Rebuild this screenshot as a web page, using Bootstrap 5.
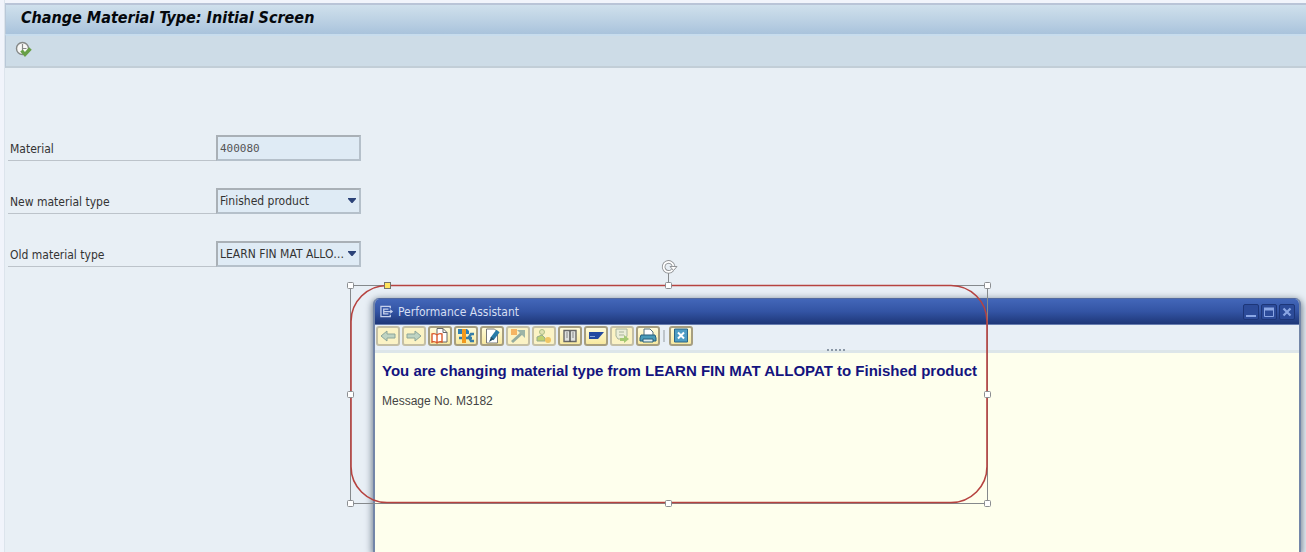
<!DOCTYPE html>
<html lang="en">
<head>
<meta charset="utf-8">
<meta name="viewport" content="width=device-width, initial-scale=1">
<title>Change Material Type: Initial Screen</title>
<link href="https://cdn.jsdelivr.net/npm/bootstrap@5.3.0/dist/css/bootstrap.min.css" rel="stylesheet">
<style>
body { background: #f1f4fb; font-family: "DejaVu Sans Condensed", "DejaVu Sans", sans-serif; font-size: 12px; line-height: 16px; color: #333; }
.screen { background: #e8eff5; border-left: 1px solid #dce4ec; margin-left: 4px; overflow: hidden; }
.top-edge { height: 3px; background: #f1f4fb; }
.title-bar { height: 31px; background: linear-gradient(#cfe0ec, #bdd2e4 50%, #a9c3dc); border-top: 2px solid #b9c4d7; border-left: 1px solid #b9c8d8; padding: 3px 15px; }
.title-bar h1 { font: italic bold 16px/20px "DejaVu Sans Condensed", "DejaVu Sans", sans-serif; color: #05080c; }
.app-bar { height: 34px; background: #cddce7; border-top: 2px solid #c7dced; border-bottom: 2px solid #c2ced7; border-left: 1px solid #b9c8d8; padding: 3px 7px; }
.app-bar .btn { width: 20px; height: 20px; }
.fields { padding-top: 67px; padding-left: 3px; width: 356px; gap: 27px; }
.field-row { height: 26px; }
.field-row label { flex: none; width: 208px; padding: 6px 2px 3px; border-bottom: 1px solid #bcc3ca; }
.field-row .form-control, .field-row .form-select { flex: 1; min-width: 0; height: 26px; min-height: 26px; border: 2px solid #a9b0b6; border-right-color: #b5c0ca; border-bottom-color: #b5c0ca; background-color: #dfebf5; padding: 0 2px; font-size: 12px; line-height: 16px; color: #333; }
.field-row .form-control { font-family: "DejaVu Sans Mono", "Liberation Mono", monospace; font-size: 11px; color: #555; }
.field-row .form-select { text-overflow: clip; padding-right: 12px; background-image: url("data:image/svg+xml,%3Csvg xmlns='http://www.w3.org/2000/svg' viewBox='0 0 8 5'%3E%3Cpath d='M0 0h8v1L4.500 5h-1L0 1z' fill='%232c4378'/%3E%3C/svg%3E"); background-size: 8px 5px; background-position: right 3px top 8px; }
.help-window { left: 368px; right: 5px; top: 298px; bottom: 0; border: 2px solid #7386a8; border-top: 1px solid #5269a0; border-bottom: 0; border-radius: 6px 6px 0 0; background: #feffed; box-shadow: 0 2px 7px 1px #6e7b8b; overflow: hidden; }
.help-title { height: 26px; background: linear-gradient(#4367b9, #3354a4 50%, #1e3778); border-bottom: 1px solid #677db0; padding: 0 4px 0 5px; color: #d5def2; }
.help-title h2 { font-size: 12px; line-height: 16px; font-weight: normal; }
.window-buttons { gap: 2px; }
.help-title .btn { width: 16px; height: 16px; border: 1px solid #1d3678; border-radius: 2px; background: #2c4b99; }
.help-tools { height: 28px; background: #e8eff6; border-bottom: 3px solid #dde6e9; gap: 2px; padding: 1px 0 0 1px; }
.help-tools .btn { width: 24px; height: 20px; border: 2px solid #a69e80; border-radius: 3px; background: linear-gradient(#fffbd9, #f8e9a0); }
.help-tools .btn:disabled { border-color: #c4bfa5; background: #fbf3c5; opacity: 1; }
.help-tools .btn:disabled svg { opacity: .7; }
.tool-rule { width: 2px; height: 12px; margin: 4px 2px 0 1px; background: #bec5cb; }
.grip { left: 50%; bottom: -1px; width: 18px; height: 2px; background: repeating-linear-gradient(90deg, #8b98a6 0 2px, transparent 2px 4px); margin-left: -10px; }
.help-text { padding: 9px 7px; font-family: "Liberation Sans", Arial, sans-serif; }
.help-text h3 { font-size: 15px; line-height: 18px; font-weight: bold; color: #14147e; margin-bottom: 13px; }
.help-text p { color: #444; }
.selection { left: 339px; top: 258px; pointer-events: none; }
</style>
</head>
<body class="min-vh-100 d-flex flex-column">
<main class="screen position-relative flex-grow-1">
  <div class="top-edge"></div>
  <header class="title-bar"><h1 class="m-0">Change Material Type: Initial Screen</h1></header>
  <div class="app-bar">
    <button type="button" class="btn p-0 border-0 d-flex align-items-center justify-content-center" aria-label="Execute">
      <svg width="17" height="17" viewBox="0 0 17 17"><circle cx="7.500" cy="7.500" r="6" fill="#f8f8f6" stroke="#858887" stroke-width="1.400"/><path d="M7.500 3v7M7.500 7.500h4" fill="none" stroke="#888" stroke-width="1.200"/><path d="M6.500 9.500l3.500 4 5.500-6" fill="none" stroke="#68a047" stroke-width="3.400"/></svg>
    </button>
  </div>
  <form class="fields d-flex flex-column">
    <div class="field-row d-flex"><label for="material">Material</label><input id="material" class="form-control rounded-0 shadow-none" value="400080"></div>
    <div class="field-row d-flex"><label for="newtype">New material type</label><select id="newtype" class="form-select rounded-0 shadow-none"><option>Finished product</option></select></div>
    <div class="field-row d-flex"><label for="oldtype">Old material type</label><select id="oldtype" class="form-select rounded-0 shadow-none"><option>LEARN FIN MAT ALLO…</option></select></div>
  </form>

  <section class="help-window position-absolute">
    <div class="help-title d-flex align-items-center">
      <svg class="me-1" width="14" height="14" viewBox="0 0 15 14" fill="none" stroke="#c5d0ec" stroke-width="1.400"><path d="M11 3V1H1v11h10v-2"/><path d="M9 4H4v5h5M4 6.500h9"/><path d="M11 4l3 2.500L11 9z" fill="#c5d0ec" stroke="none"/></svg>
      <h2 class="m-0 me-auto">Performance Assistant</h2>
      <div class="window-buttons d-flex">
        <button type="button" class="btn p-0 d-flex" aria-label="Minimize"><svg width="14" height="14"><path d="M2 11h10" stroke="#8aa6e4" stroke-width="2"/></svg></button>
        <button type="button" class="btn p-0 d-flex" aria-label="Maximize"><svg width="14" height="14" fill="none" stroke="#8aa6e4"><path d="M2.500 3.500h9v8h-9z"/><path d="M2 4h10" stroke-width="3"/></svg></button>
        <button type="button" class="btn p-0 d-flex" aria-label="Close"><svg width="14" height="14"><path d="M3.500 3.500l7 7m0-7l-7 7" stroke="#8aa6e4" stroke-width="2.200"/></svg></button>
      </div>
    </div>
    <div class="help-tools d-flex position-relative">
      <button type="button" class="btn p-0 d-flex" disabled aria-label="Back"><svg width="20" height="16"><path d="M3 8l6-5v3h8v4H9v3z" fill="#a5c6c2" stroke="#5e8587"/></svg></button>
      <button type="button" class="btn p-0 d-flex" disabled aria-label="Forward"><svg width="20" height="16"><path d="M17 8l-6-5v3H3v4h8v3z" fill="#a5c6c2" stroke="#5e8587"/></svg></button>
      <button type="button" class="btn p-0 d-flex" aria-label="Application help"><svg width="20" height="16"><path d="M7 .5h6l4 4V14H7z" fill="#fff" stroke="#666"/><path d="M13 .5v4h4" fill="none" stroke="#666"/><path d="M2 6q3-1 5 1 2-2 5-1v8q-3-1-5 1-2-2-5-1zM7 7v7" fill="#fff" stroke="#d95a2c" stroke-width="1.400"/></svg></button>
      <button type="button" class="btn p-0 d-flex" aria-label="Technical information"><svg width="20" height="16"><path d="M2 1h9l2 2v3H2z" fill="#2f80b5"/><path d="M6 1h4v14H6z" fill="#f39a1d"/><path d="M3 10h13" stroke="#367da8" stroke-width="2.500"/><path d="M6 8h4v7H6z" fill="#f39a1d"/><path d="M18 6h-3l-2 3 2 4h3" fill="none" stroke="#367da8" stroke-width="2.400"/></svg></button>
      <button type="button" class="btn p-0 d-flex" aria-label="Edit documentation"><svg width="20" height="16"><path d="M4.500 1h8l3 3v11h-11z" fill="#fff" stroke="#777"/><path d="M16 3l-6 8" stroke="#287ba7" stroke-width="4"/><path d="M9 9l-2 5 5-3z" fill="#1f4c67"/></svg></button>
      <button type="button" class="btn p-0 d-flex" disabled aria-label="Customizing"><svg width="20" height="16"><path d="M3 1h6v6H3z" fill="#f39c3a"/><path d="M4 14l10-9" stroke="#698f91" stroke-width="3"/><path d="M9 2h8v8l-3-3z" fill="#769b9b"/></svg></button>
      <button type="button" class="btn p-0 d-flex" disabled aria-label="Contact"><svg width="20" height="16"><circle cx="8" cy="4" r="2.500" fill="#d5dcaa" stroke="#8ea96b"/><path d="M3 13V9l5-2 3 3v3z" fill="#a5c34e" stroke="#6a8e7b"/><circle cx="14" cy="12" r="3" fill="#ecb33d"/></svg></button>
      <button type="button" class="btn p-0 d-flex" aria-label="Glossary"><svg width="20" height="16"><path d="M4 2.500h12v11H4z" fill="#dfe1df" stroke="#666" stroke-width="1.400"/><path d="M10 3v11" stroke="#555" stroke-width="1.500"/><path d="M6 5h2M6 7h2M6 9h2M12 5h2M12 7h2M12 9h2" stroke="#888"/></svg></button>
      <button type="button" class="btn p-0 d-flex" aria-label="SAP help"><svg width="20" height="16"><path d="M3 4h7v7H3z" fill="#244aa0"/><path d="M10 4h8l-6 7h-2z" fill="#244aa0"/><path d="M4 8.500h5" stroke="#87a6da"/></svg></button>
      <button type="button" class="btn p-0 d-flex" disabled aria-label="Export"><svg width="20" height="16"><path d="M4 1h11v7l-2 3H6L4 8z" fill="#e5ece1" stroke="#86998a"/><path d="M7 4h5M7 7h5" stroke="#86998a"/><path d="M8 10h4V7l5 4-5 4v-2H8z" fill="#80b850"/></svg></button>
      <button type="button" class="btn p-0 d-flex" aria-label="Print"><svg width="20" height="16"><path d="M6 7V1h6l3 3v3" fill="#fff" stroke="#52707d"/><path d="M3 7h14l1 3v3H2v-3z" fill="#4a9bb8" stroke="#265f7b"/><path d="M5 11h10v3H5z" fill="#ddecf0" stroke="#265f7b"/></svg></button>
      <span class="tool-rule"></span>
      <button type="button" class="btn p-0 d-flex" aria-label="Close help"><svg width="20" height="16"><path d="M3.500 1h13v13h-13z" fill="#4e9dc4" stroke="#2b6587"/><path d="M7 4.500l6 6m0-6l-6 6" stroke="#fff" stroke-width="2"/></svg></button>
      <span class="grip position-absolute"></span>
    </div>
    <article class="help-text">
      <h3>You are changing material type from LEARN FIN MAT ALLOPAT to Finished product</h3>
      <p class="m-0">Message No. M3182</p>
    </article>
  </section>

  <!-- Selected rounded rectangle with its resize, shape and rotate handles -->
  <svg class="selection position-absolute" width="652" height="252" fill="none">
    <path d="M6.500 27.500h637v218H6.500zM324.500 27V14" stroke="#85898c"/>
    <rect x="7" y="27.500" width="636" height="217" rx="36" stroke="#b64340" stroke-width="1.600"/>
    <g fill="#fff" stroke="#8b8e91">
      <rect x="3.500" y="24.500" width="6" height="6" rx="1"/><rect x="321.500" y="24.500" width="6" height="6" rx="1"/><rect x="640.500" y="24.500" width="6" height="6" rx="1"/>
      <rect x="3.500" y="133.500" width="6" height="6" rx="1"/><rect x="640.500" y="133.500" width="6" height="6" rx="1"/>
      <rect x="3.500" y="242.500" width="6" height="6" rx="1"/><rect x="321.500" y="242.500" width="6" height="6" rx="1"/><rect x="640.500" y="242.500" width="6" height="6" rx="1"/>
    </g>
    <rect x="40.500" y="24.500" width="6" height="6" fill="#ffe45c" stroke="#77756a"/>
    <path d="M328.500 12a5 5 0 1 1 1-4" stroke="#909396" stroke-width="3.600"/><path d="M326 8.500h7l-3.500 4z" fill="#fff" stroke="#909396"/><path d="M328.500 12a5 5 0 1 1 1-4" stroke="#fff" stroke-width="1.800"/>
  </svg>
</main>
<script src="https://cdn.jsdelivr.net/npm/bootstrap@5.3.0/dist/js/bootstrap.bundle.min.js"></script>
</body>
</html>
